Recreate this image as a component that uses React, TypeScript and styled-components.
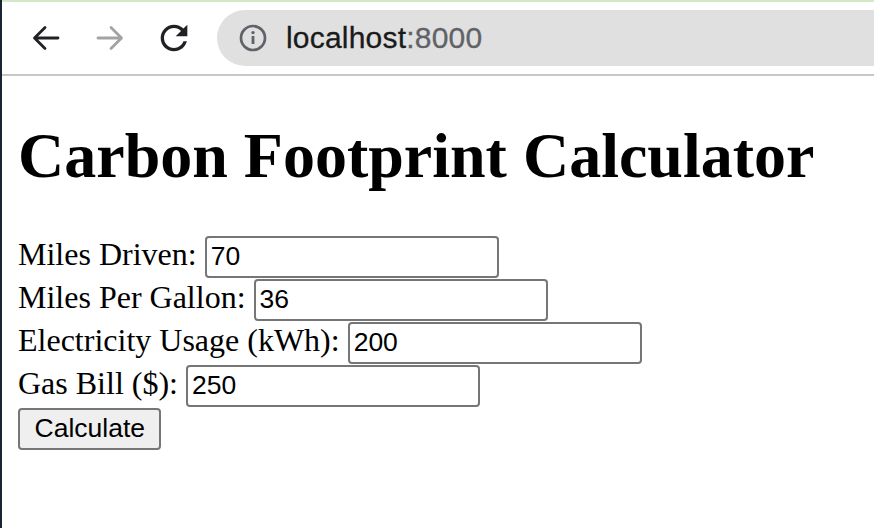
import React from "react";
import styled, { createGlobalStyle } from "styled-components";

const Global = createGlobalStyle`
  html, body { margin: 0; padding: 0; background: #ffffff; }
  #root { min-height: 100vh; }
`;

const Frame = styled.div`
  display: flex;
  flex-direction: column;
  min-height: 100vh;
  border-left: 2px solid #1b2430;
  box-sizing: border-box;
  overflow: hidden;
`;

const Accent = styled.div`
  height: 2px;
  background: #d3e8c6;
`;

const Toolbar = styled.div`
  height: 72px;
  border-bottom: 2px solid #c7c7c7;
  display: flex;
  align-items: center;
  padding-left: 24px;
  gap: 24px;
  overflow: hidden;
  background: #ffffff;
`;

const IconBox = styled.div<{ $color: string }>`
  width: 40px;
  height: 40px;
  flex: none;
  display: flex;
  align-items: center;
  justify-content: center;
  color: ${(p) => p.$color};
`;

const AddressBar = styled.div`
  flex: 1;
  height: 56px;
  margin-left: -1px;
  margin-right: -60px;
  border-radius: 28px;
  background: #e0e0e0;
  display: flex;
  align-items: center;
  padding-left: 22px;
  gap: 19px;
`;

const Host = styled.span`
  font-family: "Liberation Sans", Arial, sans-serif;
  font-size: 30px;
  color: #1a1a1a;
  letter-spacing: 0.2px;
  -webkit-text-stroke: 0.3px #1a1a1a;
`;

const Port = styled.span`
  color: #5f6368;
  -webkit-text-stroke: 0.3px #5f6368;
`;

const Page = styled.div`
  padding: 0 16px;
  font-family: "Liberation Serif", "Times New Roman", serif;
  color: #000;
`;

const Title = styled.h1`
  font-family: "Liberation Serif", "Times New Roman", serif;
  font-size: 64px;
  font-weight: bold;
  margin: 42.88px 0;
  line-height: normal;
`;

const Form = styled.form`
  display: flex;
  flex-direction: column;
`;

const Row = styled.div`
  height: 43px;
  display: flex;
  align-items: baseline;
  gap: 8px;
`;

const Label = styled.label`
  font-family: "Liberation Serif", "Times New Roman", serif;
  font-size: 32px;
  line-height: normal;
  white-space: nowrap;
`;

const Field = styled.input`
  box-sizing: border-box;
  width: 294px;
  height: 42px;
  border: 2px solid #767676;
  border-radius: 4px;
  padding: 0 4px;
  font-family: "Liberation Sans", Arial, sans-serif;
  font-size: 26.5px;
  color: #000;
  background: #fff;
  outline: none;
  margin: 0;
`;

const Button = styled.button`
  box-sizing: border-box;
  height: 42px;
  padding: 0 14.5px;
  border: 2px solid #767676;
  border-radius: 4px;
  background: #efefef;
  font-family: "Liberation Sans", Arial, sans-serif;
  font-size: 26.5px;
  color: #000;
  margin: 0;
`;

const BackIcon = () => (
  <svg width="32" height="32" viewBox="0 0 32 32" fill="none" stroke="currentColor" strokeWidth="2.8" strokeLinecap="round" strokeLinejoin="round">
    <path d="M28 16H5M15 5.5 4.5 16 15 26.5" />
  </svg>
);

const ForwardIcon = () => (
  <svg width="32" height="32" viewBox="0 0 32 32" fill="none" stroke="currentColor" strokeWidth="2.8" strokeLinecap="round" strokeLinejoin="round">
    <path d="M4 16h23M17 5.5 27.5 16 17 26.5" />
  </svg>
);

const ReloadIcon = () => (
  <svg width="42" height="42" viewBox="0 0 24 24" fill="currentColor">
    <path d="M17.65 6.35C16.2 4.9 14.21 4 12 4c-4.42 0-7.99 3.58-7.99 8s3.57 8 7.99 8c3.73 0 6.84-2.55 7.73-6h-2.08c-.82 2.33-3.04 4-5.65 4-3.31 0-6-2.69-6-6s2.69-6 6-6c1.66 0 3.14.69 4.22 1.78L13 11h7V4l-2.35 2.35z" />
  </svg>
);

const InfoIcon = () => (
  <svg width="28" height="28" viewBox="0 0 28 28" fill="none">
    <circle cx="14" cy="14" r="12" stroke="#5f6368" strokeWidth="2.7" />
    <rect x="12.6" y="12" width="2.8" height="8" rx="0.6" fill="#5f6368" />
    <circle cx="14" cy="8.6" r="1.7" fill="#5f6368" />
  </svg>
);

const fields = [
  { label: "Miles Driven:", value: "70" },
  { label: "Miles Per Gallon:", value: "36" },
  { label: "Electricity Usage (kWh):", value: "200" },
  { label: "Gas Bill ($):", value: "250" },
];

export default function App() {
  return (
    <>
      <Global />
      <Frame>
        <Accent />
        <Toolbar>
          <IconBox $color="#202124">
            <BackIcon />
          </IconBox>
          <IconBox $color="#a3a3a3">
            <ForwardIcon />
          </IconBox>
          <IconBox $color="#202124">
            <ReloadIcon />
          </IconBox>
          <AddressBar>
            <InfoIcon />
            <Host>
              localhost<Port>:8000</Port>
            </Host>
          </AddressBar>
        </Toolbar>
        <Page>
          <Title>Carbon Footprint Calculator</Title>
          <Form onSubmit={(e) => e.preventDefault()}>
            {fields.map((f) => (
              <Row key={f.label}>
                <Label>{f.label}</Label>
                <Field type="text" defaultValue={f.value} />
              </Row>
            ))}
            <Row>
              <Button type="submit">Calculate</Button>
            </Row>
          </Form>
        </Page>
      </Frame>
    </>
  );
}
